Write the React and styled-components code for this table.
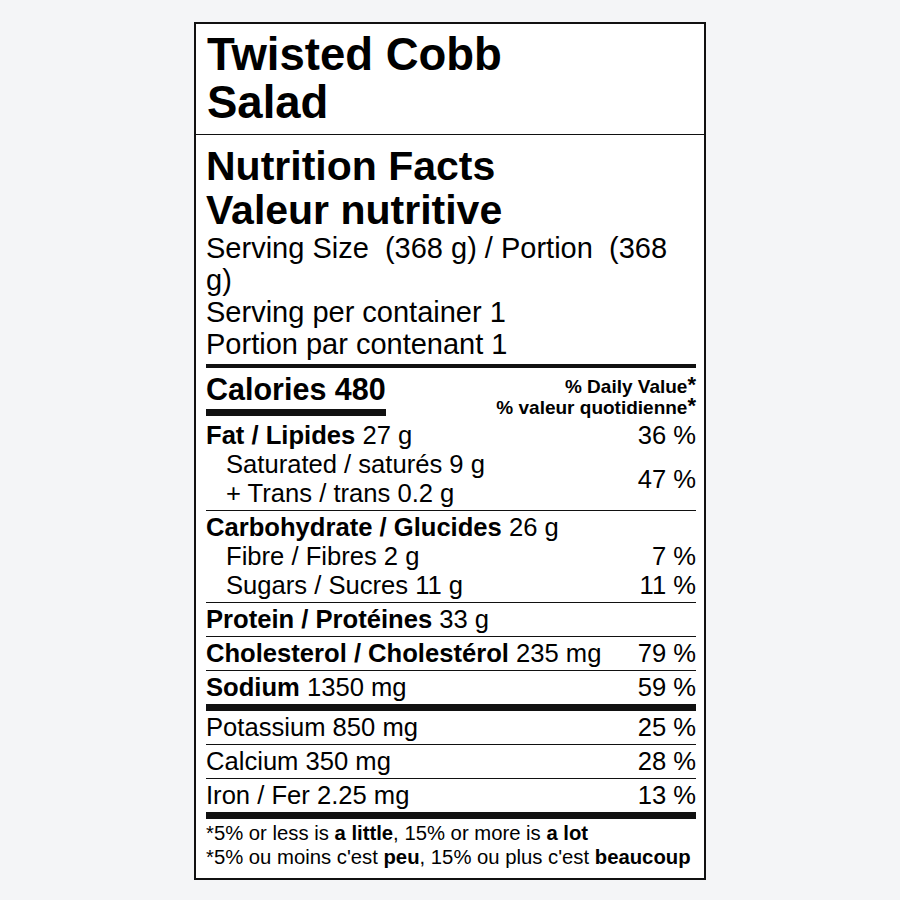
import React from "react";
import styled, { createGlobalStyle } from "styled-components";

const GlobalStyle = createGlobalStyle`
  body {
    margin: 0;
    background: #f4f5f7;
    font-family: "Liberation Sans", Arial, sans-serif;
    color: #000;
  }
`;

const Page = styled.div`
  display: flex;
  justify-content: center;
  padding-top: 22px;
  padding-bottom: 20px;
`;

const Card = styled.div`
  width: 512px;
  box-sizing: border-box;
  background: #fff;
  border: 2px solid #111;
`;

const Title = styled.h1`
  margin: 0;
  padding: 7px 11px 7px;
  font-size: 45.5px;
  line-height: 48px;
  font-weight: 700;
  border-bottom: 1px solid #111;
`;

const Body = styled.div`
  padding: 0 8px 0 10px;
`;

const Header = styled.div`
  padding: 9px 0 4px;
  border-bottom: 4px solid #111;
`;

const Heading = styled.h2`
  margin: 0;
  font-size: 41px;
  line-height: 44px;
  font-weight: 700;
`;

const Serving = styled.p`
  margin: 0;
  font-size: 29px;
  line-height: 32px;
  padding-right: 26px;
`;

const CaloriesRow = styled.div`
  display: flex;
  justify-content: space-between;
  align-items: flex-start;
  padding-top: 4px;
`;

const Calories = styled.div`
  font-size: 30.5px;
  line-height: 34px;
  font-weight: 700;
  padding-bottom: 3px;
  border-bottom: 7px solid #111;
`;

const DailyValue = styled.div`
  margin-top: 4px;
  text-align: right;
  font-size: 19px;
  line-height: 21px;
  font-weight: 700;
`;

const Star = styled.span`
  font-size: 22px;
  line-height: 0;
  vertical-align: 1px;
`;

const Group = styled.div`
  padding: 2px 0;
  border-top: ${p => (p.$thick ? "7px" : p.$none ? "0" : "1px")} solid #111;
  margin-top: ${p => (p.$none ? "1px" : "0")};
`;

const Line = styled.div`
  display: flex;
  justify-content: space-between;
  font-size: 25.6px;
  line-height: 29px;
  padding-left: ${p => (p.$sub ? "20px" : "0")};
`;

const Split = styled.div`
  display: flex;
  justify-content: space-between;
  align-items: center;
  font-size: 25.6px;
  line-height: 29px;
`;

const SubLines = styled.div`
  padding-left: 20px;
`;

const Footnote = styled.div`
  border-top: 7px solid #111;
  padding: 2px 0 9px;
  font-size: 20.3px;
  line-height: 24px;
`;

const rows = [
  { bold: "Protein / Protéines", amount: "33 g" },
  { bold: "Cholesterol / Cholestérol", amount: "235 mg", dv: "79 %" },
  { bold: "Sodium", amount: "1350 mg", dv: "59 %" },
];

const minerals = [
  { label: "Potassium 850 mg", dv: "25 %" },
  { label: "Calcium 350 mg", dv: "28 %" },
  { label: "Iron / Fer 2.25 mg", dv: "13 %" },
];

export default function App() {
  return (
    <>
      <GlobalStyle />
      <Page>
        <Card>
          <Title>
            Twisted Cobb
            <br />
            Salad
          </Title>
          <Body>
            <Header>
              <Heading>
                Nutrition Facts
                <br />
                Valeur nutritive
              </Heading>
              <Serving>Serving Size&nbsp; (368 g) / Portion&nbsp; (368 g)</Serving>
              <Serving>
                Serving per container 1
                <br />
                Portion par contenant 1
              </Serving>
            </Header>

            <CaloriesRow>
              <Calories>Calories 480</Calories>
              <DailyValue>
                % Daily Value<Star>*</Star>
                <br />
                % valeur quotidienne<Star>*</Star>
              </DailyValue>
            </CaloriesRow>

            <Group $none>
              <Line>
                <span>
                  <b>Fat / Lipides</b> 27 g
                </span>
                <span>36 %</span>
              </Line>
              <Split>
                <SubLines>
                  <div>Saturated / saturés 9 g</div>
                  <div>+ Trans / trans 0.2 g</div>
                </SubLines>
                <span>47 %</span>
              </Split>
            </Group>

            <Group>
              <Line>
                <span>
                  <b>Carbohydrate / Glucides</b> 26 g
                </span>
              </Line>
              <Line $sub>
                <span>Fibre / Fibres 2 g</span>
                <span>7 %</span>
              </Line>
              <Line $sub>
                <span>Sugars / Sucres 11 g</span>
                <span>11 %</span>
              </Line>
            </Group>

            {rows.map(r => (
              <Group key={r.bold}>
                <Line>
                  <span>
                    <b>{r.bold}</b> {r.amount}
                  </span>
                  {r.dv && <span>{r.dv}</span>}
                </Line>
              </Group>
            ))}

            {minerals.map((m, i) => (
              <Group key={m.label} $thick={i === 0}>
                <Line>
                  <span>{m.label}</span>
                  <span>{m.dv}</span>
                </Line>
              </Group>
            ))}

            <Footnote>
              <div>
                *5% or less is <b>a little</b>, 15% or more is <b>a lot</b>
              </div>
              <div>
                *5% ou moins c'est <b>peu</b>, 15% ou plus c'est <b>beaucoup</b>
              </div>
            </Footnote>
          </Body>
        </Card>
      </Page>
    </>
  );
}
